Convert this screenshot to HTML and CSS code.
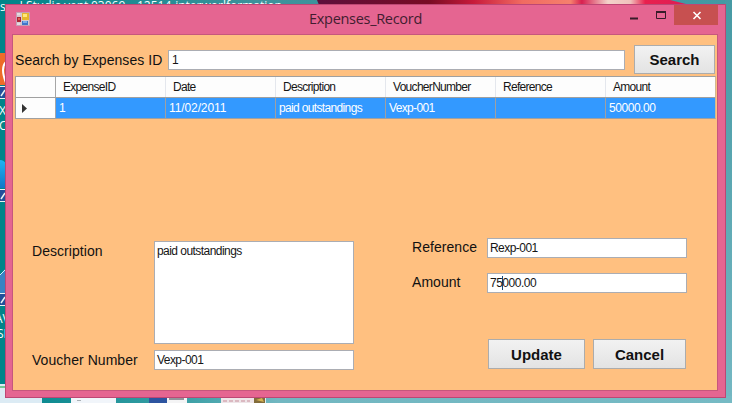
FILE: index.html
```html
<!DOCTYPE html>
<html lang="en">
<head>
<meta charset="utf-8">
<title>Expenses_Record</title>
<link rel="stylesheet" href="styles.css">
</head>
<body>
<svg class="desktop" viewBox="0 0 732 403" aria-hidden="true">
  <defs>
    <linearGradient id="sea" x1="0" x2="1"><stop offset="0" stop-color="#008489"/><stop offset=".35" stop-color="#3d929b"/><stop offset="1" stop-color="#4499a3"/></linearGradient>
    <linearGradient id="side" x1="0" x2="0" y1="0" y2="1"><stop offset="0" stop-color="#469aa4"/><stop offset="1" stop-color="#75b8c3"/></linearGradient>
    <linearGradient id="petal" x1="0" x2="1"><stop offset="0" stop-color="#5d0f3c"/><stop offset=".3" stop-color="#780c24"/><stop offset=".42" stop-color="#c81a3b"/><stop offset=".55" stop-color="#f06b61"/><stop offset=".68" stop-color="#f5806d"/><stop offset=".71" stop-color="#d82050"/><stop offset=".78" stop-color="#f3d3ca"/><stop offset=".84" stop-color="#f0c2bd"/><stop offset=".88" stop-color="#e9204e"/><stop offset="1" stop-color="#de1c54"/></linearGradient>
    <linearGradient id="foot" x1="0" x2="1"><stop offset="0" stop-color="#00858b"/><stop offset=".25" stop-color="#3a9fa5"/><stop offset=".38" stop-color="#72b7c1"/><stop offset="1" stop-color="#76bac4"/></linearGradient>
    <linearGradient id="orb" x1="0" x2="0" y1="0" y2="1"><stop offset="0" stop-color="#20b3f2"/><stop offset="1" stop-color="#1276c7"/></linearGradient>
  </defs>
  <rect width="732" height="403" fill="#00848a"/>
  <rect width="732" height="6" fill="url(#sea)"/>
  <path d="M317 0H670L690 5H319Z" fill="url(#petal)"/>
  <rect x="725" width="7" height="403" fill="url(#side)"/>
  <rect y="396" width="732" height="7" fill="url(#foot)"/>
  <g class="shortcut-text">
    <text x="0" y="11">sual</text><text x="26" y="10">Studio</text>
    <text x="64" y="10">vent</text><text x="91" y="10">03069</text><text x="137" y="10">12514-interwork</text><text x="226" y="10">formation</text>
    <text x="-1" y="115">X</text><text x="-1" y="130">C</text><text x="-5" y="323">AV</text><text x="-3" y="338">SI</text>
  </g>
  <path d="M0 53h6v32H0z" fill="#ed6c28"/><path d="M6 62q-3 3-3 8t3 13" fill="none" stroke="#fff" stroke-width="2"/>
  <path d="M0 160q4 0 6 4v24H0z" fill="url(#orb)"/>
  <path d="M0 275l5-6v24H0z" fill="#3883c3"/><path d="M0 275l5-5" stroke="#cfefff"/>
  <g fill="#214f9a" stroke="#e6f3f4"><path d="M-1 86.500h7v12h-7zM-1 189.500h7v12h-7zM-1 293.500h7v12h-7z"/><path d="M1 96l4-6m-4 109 4-6m-4 110 4-6" fill="none" stroke-width="1.500"/></g>
  <path d="M0 384h42v19H0z" fill="#dcebf4"/><path d="M0 387h6" stroke="#73c795" stroke-width="2"/>
  <path d="M71 396h45v7H71z" fill="#f1f5fa"/><path d="M77 400.500h4" stroke="#a9b0b5"/><path d="M149 396h18v7h-18z" fill="#2d54a0"/><path d="M167 396h20v7h-20z" fill="#f4f4f5"/><path d="M169 396h15v4h-15z" fill="#92959b"/>
  <path d="M221 396h33v7h-33z" fill="#eee5e8"/><path d="M223 401h27" stroke="#c88d9b" stroke-dasharray="4 2"/><path d="M254 396h11v7h-11z" fill="#826c3b"/><path d="M256 400l6-2 2 4z" fill="#d6b452"/><path d="M265.500 396v7" stroke="#e2edee"/>
</svg>
<main class="window">
  <header class="titlebar">
    <svg class="app-icon" viewBox="0 0 14 14"><path d="M.5.5h13v13H.5z" fill="#d6c9d1" stroke="#c4a0b4"/><path d="M1 5h4v5H1z" fill="#ad2536"/><path d="M2 6h2v2H2z" fill="#e05d55"/><path d="M6 1h7v7H6z" fill="#e6b72d"/><path d="M7 2h4v3H7z" fill="#ffe77a"/><path d="M6 9h6v4H6z" fill="#3f76c9"/><path d="M7 9h4v2H7z" fill="#78acea"/><path d="M1 2h3M1 12h3" stroke="#f1edf0"/></svg>
    <h1><span>Expenses_Record</span></h1>
    <svg class="window-controls" viewBox="0 0 96 20"><path d="M8 13.500h8" stroke="#381c29" stroke-width="2"/><path d="M34.500 6.500h9v7h-9z" fill="none" stroke="#381c29"/><path d="M34 7h10" stroke="#381c29" stroke-width="2"/><path d="M52 0h45v20H52z" fill="#c75050"/><path d="M71.500 7l7 7m0-7-7 7" stroke="#fff" stroke-width="1.600"/></svg>
  </header>
  <section class="client">
    <div class="search">
      <label class="search-label">Search by Expenses ID</label><div class="field query">1</div><button>Search</button>
    </div>
    <div class="table">
      <div class="row head"><i></i><b>ExpenseID</b><b>Date</b><b>Description</b><b>VoucherNumber</b><b>Reference</b><b>Amount</b></div>
      <div class="row selected"><i><svg viewBox="0 0 5 9"><path d="M0 0l5 4.500L0 9z" fill="#333"/></svg></i><b>1</b><b class="date">11/02/2011</b><b>paid outstandings</b><b>Vexp-001</b><b></b><b>50000.00</b></div>
    </div>
    <div class="details">
      <div class="left">
        <label>Description</label><div class="field area">paid outstandings</div>
        <label>Voucher Number</label><div class="field">Vexp-001</div>
      </div>
      <div class="right">
        <div class="pair"><label>Reference</label><div class="field">Rexp-001</div></div>
        <div class="pair"><label>Amount</label><div class="field amount">75<span class="caret"></span>000.00</div></div>
        <div class="actions"><button>Update</button><button class="cancel">Cancel</button></div>
      </div>
    </div>
  </section>
</main>
</body>
</html>
```
FILE: styles.css
```css
* { box-sizing: border-box; }
body { margin: 0; width: 732px; height: 403px; overflow: hidden; font: 12px "Liberation Sans", Arial, sans-serif; color: #151515; }
.desktop { position: absolute; inset: 0; width: 732px; height: 403px; }
.shortcut-text { font: 12px "Open Sans", sans-serif; fill: #f5ffff; }
.window { position: relative; width: 721px; height: 394px; margin: 4px 0 0 5px; padding: 0 7px 7px; background: #e56591; border: 1px solid #bd4774; }
.titlebar { height: 29px; display: grid; grid-template-columns: 96px 1fr 96px; align-items: start; }
.app-icon { width: 14px; height: 14px; margin: 7px 0 0 3px; }
h1 { margin: 0; padding-top: 4px; text-align: center; font: 14.5px/20px "Open Sans", sans-serif; color: #421d30; }
h1 span { display: inline-block; letter-spacing: -.3px; }
.window-controls { width: 96px; height: 20px; justify-self: end; }
.client { height: 357px; margin-left: -1px; border: 1px solid #c6577d; background: #ffc080; padding: 9px 2px; }
.search { height: 30px; display: flex; align-items: center; padding-top: 1px; }
label { font-size: 14px; line-height: 18px; white-space: nowrap; letter-spacing: .05px; color: #111; }
.search-label { width: 153px; }
.field { height: 20px; border: 1px solid #abadb3; background: #fff; padding: 0 2px; line-height: 18px; letter-spacing: -.55px; white-space: nowrap; }
.query { width: 457px; margin-right: 9px; padding-left: 3px; }
button { width: 81px; height: 29px; padding: 0; border: 1px solid #acacac; background: linear-gradient(#f2f2f2, #e3e3e3); color: #111; font: bold 15px/27px "Liberation Sans", Arial, sans-serif; }
.table { width: 701px; margin-top: 2px; border: 1px solid #a0a0a0; border-right-color: #d2b792; }
.row { display: grid; grid-template-columns: 40px repeat(5, 110px) 1fr; height: 20px; line-height: 20px; background: #fdfdfd; }
.row b { font-weight: normal; padding-left: 7px; border-right: 1px solid #e4e7ed; letter-spacing: -.7px; white-space: nowrap; }
.row i { border-right: 1px solid #a6a6a6; }
.row b:last-child { border-right: 0; }
.row.selected { height: 21px; line-height: 20px; border-top: 1px solid #a0a0a0; background: #3399ff; color: #fff; }
.row.selected b { padding-left: 3px; border-color: #a0a0a0; letter-spacing: -.65px; }
.row.selected .date { letter-spacing: -.1px; }
.row.selected b:last-child { letter-spacing: -.45px; }
.selected i { background: #fdfdfd; }
.selected svg { display: block; width: 5px; height: 9px; margin: 6px 0 0 6px; }
.details { display: grid; grid-template-columns: 380px 1fr; padding: 119px 0 0 17px; }
.left { display: grid; grid-template-columns: 122px 200px; grid-template-rows: 103px 20px; row-gap: 6px; padding-top: 3px; }
.left label { padding-top: 1px; }
.area { height: 103px; }
.right { display: flex; flex-direction: column; }
.pair { display: grid; grid-template-columns: 75px 200px; height: 20px; margin-bottom: 15px; }
.amount { letter-spacing: -.5px; }
.actions { display: flex; gap: 8px; margin: 31px 0 0 76px; }
.actions button { width: 97px; height: 30px; }
.actions .cancel { width: 93px; }
.caret { display: inline-block; width: 1px; height: 14px; margin-right: -1px; background: #17497a; vertical-align: -3px; }
```
